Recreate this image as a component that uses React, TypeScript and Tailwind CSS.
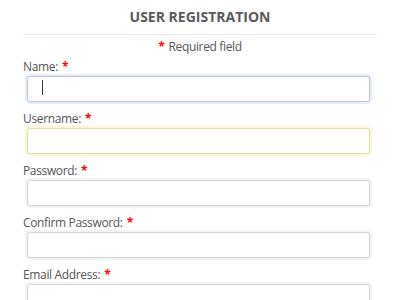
import { useState } from 'react'

const FIELDS = [
  { id: 'name', label: 'Name:', type: 'text', tone: 'focus' },
  { id: 'username', label: 'Username:', type: 'text', tone: 'warn' },
  { id: 'password', label: 'Password:', type: 'password', tone: 'plain' },
  { id: 'confirm', label: 'Confirm Password:', type: 'password', tone: 'plain' },
  { id: 'email', label: 'Email Address:', type: 'email', tone: 'plain' },
]

const TONE: Record<string, string> = {
  focus: 'border-[#b9c4d4] ring-2 ring-[#e6eef9]',
  warn: 'border-[#e6dca6] ring-2 ring-[#fdf7d6]',
  plain: 'border-[#d4d4d4] ring-2 ring-[#f3f3f3]',
}

export default function App() {
  const [values, setValues] = useState<Record<string, string>>({})

  return (
    <div className="w-[400px] h-[300px] overflow-hidden bg-white font-['Open_Sans',sans-serif] text-[#555]">
      <div className="px-[23px]">
        <h1 className="pt-[7px] pb-[8px] text-center text-[14px] font-bold uppercase text-[#595959] border-b border-[#e8e8e8] leading-[19px]">
          User Registration
        </h1>
        <p className="mt-[4px] text-center text-[12px] leading-[16px] tracking-[-0.35px] text-[#555]">
          <span className="font-bold text-[#f00] mr-[4px]">*</span>Required field
        </p>
        <div className="mt-[4px] flex flex-col gap-[9px]">
          {FIELDS.map(f => (
            <div key={f.id}>
              <label htmlFor={f.id} className="block text-[12px] leading-[16px] tracking-[-0.35px] text-[#555]">
                {f.label}<span className="ml-[4px] font-bold text-[#f00]">*</span>
              </label>
              <div className="pl-[4px] pr-[7px] pt-[1px]">
                <div
                  className={`relative h-[26px] rounded-[3px] border bg-white ${TONE[f.tone]}`}
                >
                  <input
                    id={f.id}
                    type={f.type}
                    value={values[f.id] ?? ''}
                    onChange={e => setValues(v => ({ ...v, [f.id]: e.target.value }))}
                    className="h-full w-full bg-transparent px-[14px] text-[12px] outline-none"
                  />
                  {f.tone === 'focus' && (
                    <span className="absolute left-[14px] top-[3px] h-[15px] w-px bg-[#333]" />
                  )}
                </div>
              </div>
            </div>
          ))}
        </div>
      </div>
    </div>
  )
}
